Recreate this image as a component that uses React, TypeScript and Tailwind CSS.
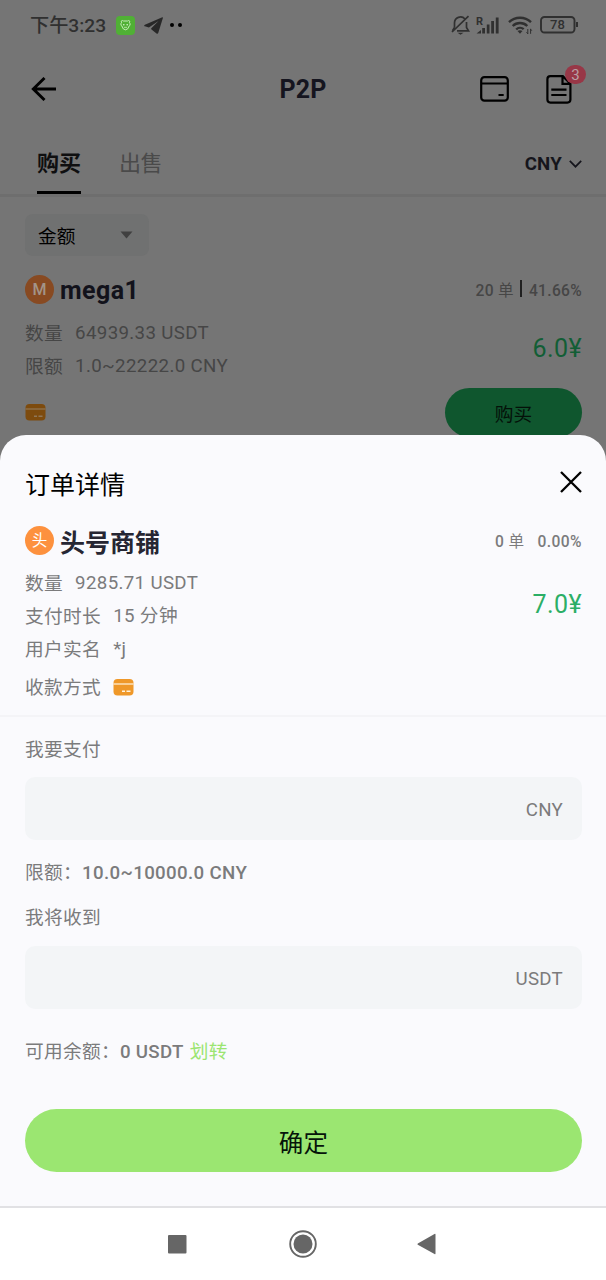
import type { ReactNode } from "react";

function StatusBar() {
    return (
        <div className="flex h-[50px] items-center justify-between pl-[30px] pr-[27px] text-[#303030]">
            <div className="flex items-center">
                <span className="w-[86px] whitespace-nowrap pt-[1px] text-[19.200px] font-medium leading-[26px]">下午3:23</span>
                <svg className="block" width="19" height="19" viewBox="0 0 19 19" fill="none">
                    <rect width="19" height="19" rx="4" fill="#50b035" />
                    <path d="M5.2 5.2 6.4 4.500 7.400 5h4.200l1-.5 1.200.7-.4 1.600q1 .5.600 2.200-.3.900-.9 1-.9 3.800-3.600 3.800T5.900 10q-.6-.1-.9-1-.4-1.700.6-2.200z" stroke="#c6edb9" strokeWidth="1" />
                    <circle cx="7.800" cy="8.800" r=".8" fill="#d9f5d0" />
                    <circle cx="11.200" cy="8.800" r=".8" fill="#d9f5d0" />
                    <path d="M8 11.300h3" stroke="#c6edb9" strokeWidth=".8" />
                </svg>
                <svg className="ml-[9px] block" width="19" height="17" viewBox="0 0 19 17" fill="#282828">
                    <path d="M18.300.2.900 7.800c-1 .5-1 1.200 0 1.500l4 1.200L14.500 4 7.300 11.300c-.3.400-.2.800.2 1.100l5 4c.8.600 1.600.3 1.800-.7L18.900.9c.1-.6-.1-.9-.6-.7z" />
                </svg>
                <span className="ml-[7px] size-[4px] rounded-full bg-black" />
                <span className="ml-[4px] size-[4px] rounded-full bg-black" />
            </div>
            <div className="flex items-center">
                <svg className="block" width="19" height="20" viewBox="0 0 19 20" fill="none" stroke="#303030" strokeWidth="1.700">
                    <path d="M3.500 12.500V8a6 6 0 0 1 10.500-4M15.500 7v5.500l2 3.300H6M1 17 17.500 1.200M1.500 15.800l2-3.300" />
                    <path d="M6.500 17.800h6l-3 1.900z" fill="#303030" stroke="none" />
                </svg>
                <svg className="ml-[6px] block" width="25" height="19" viewBox="0 0 25 19" fill="#303030">
                    <text x="0" y="8.500" fontSize="11" fontWeight="700">R</text>
                    <path d="M.5 17.500l4.500-3.500v3.500zM6.200 12H9v5.500H6.200zM10.800 8.500h2.700v9h-2.700zM15.200 5H18v12.500h-2.800zM19.800 1.500h2.800v16h-2.800z" />
                </svg>
                <svg className="ml-[7px] block" width="25" height="20" viewBox="0 0 25 20" fill="none" stroke="#303030" strokeWidth="2.400">
                    <path d="M1 7.100a16 16 0 0 1 22 0M4.700 11a10.500 10.500 0 0 1 14.600 0M8.200 14.500a5.500 5.500 0 0 1 7.500-.3" />
                    <path d="M9.500 16q2.500-1.500 5 0L12 18.800z" fill="#303030" stroke="none" />
                    <path d="M19.800 14v5M22.600 13.800v5M18.500 17.300l1.300 1.500M22.600 14.200l1.200 1.500" strokeWidth="1" />
                </svg>
                <svg className="ml-[7px] mr-[1px] block" width="38" height="18" viewBox="0 0 38 18" fill="none">
                    <rect x="1" y="1" width="33.500" height="15.500" rx="3.500" stroke="#303030" strokeWidth="1.900" />
                    <path d="M37 6v5" stroke="#303030" strokeWidth="2" />
                    <text x="17.500" y="13.400" textAnchor="middle" fill="#303030" fontSize="13" fontWeight="500">78</text>
                </svg>
            </div>
        </div>
    );
}

function AppBar() {
    return (
        <div className="grid h-[78px] grid-cols-3 items-center px-[22px]">
            <svg className="ml-[9px] block" width="26" height="24" viewBox="0 0 26 24" fill="none" stroke="#000" strokeWidth="2.900">
                <path d="M25 12H2.500M13.500 1 2.300 12l11.200 11" />
            </svg>
            <h1 className="pt-[2px] text-center text-[25px] font-bold leading-[30px] tracking-[0.200px] text-[#15151f]">P2P</h1>
            <div className="flex items-center justify-end">
                <svg className="block" width="29" height="26" viewBox="0 0 29 26" fill="none" stroke="#000" strokeWidth="2.200">
                    <rect x="1.200" y="1.200" width="26.600" height="23.400" rx="3.200" />
                    <path d="M1.200 7.500h26.600M18.500 19h5.200" />
                </svg>
                <div className="relative ml-[37px] mr-[12px]">
                    <svg className="block" width="26" height="29" viewBox="0 0 26 29" fill="none" stroke="#000" strokeWidth="2.200">
                        <path d="M16.800 1.200H4.400a3 3 0 0 0-3 3v20.400a3 3 0 0 0 3 3h17a3 3 0 0 0 3-3V8.800zM16.500 1.200v7.600h7.900M5.300 14.700h15.200M5.300 20h15.200" />
                    </svg>
                    <span className="absolute -right-[14px] -top-[10px] flex h-[19px] w-[21px] items-center justify-center rounded-full bg-[#983747] pt-[2px] text-[15px] text-[#b8a0a4]">
                        3
                    </span>
                </div>
            </div>
        </div>
    );
}

function Tabs() {
    return (
        <div className="flex h-[69px] items-start justify-between border-b-[3px] border-[#6e6e6e] pl-[37px] pr-[24px]">
            <div className="flex gap-[38px] text-[22px] leading-[30px]">
                <div className="flex h-[66px] flex-col justify-between pt-[21px]">
                    <span className="font-bold text-[#0f0f10]">购买</span>
                    <span className="h-[3px] w-[44px] bg-black" />
                </div>
                <span className="pt-[21px] tracking-[-0.5px] text-[#4a4a4a]">出售</span>
            </div>
            <div className="flex items-center gap-[7px] pt-[23px] text-[18.700px] font-bold leading-[26px] tracking-[0.200px] text-[#15151c]">
                CNY
                <svg className="block" width="13" height="8" viewBox="0 0 13 8" fill="none" stroke="#15151c" strokeWidth="1.700">
                    <path d="m.8.900 5.700 5.800L12.200.9" />
                </svg>
            </div>
        </div>
    );
}

function CardIcon({ dimmed = false }: { dimmed?: boolean }) {
    const fill = dimmed ? "#7d4b0e" : "#ef9829";
    const line = dimmed ? "#8f7758" : "#fff3df";
    return (
        <svg className="block" width="21" height="17" viewBox="0 0 21 17" fill="none">
            <rect x=".5" width="20" height="16.500" rx="4" fill={fill} />
            <path d="M.5 5h20" stroke={line} strokeWidth="1.200" />
            <path d="M9 12.200h3M13.500 12.200h4" stroke={line} strokeWidth="1.500" />
        </svg>
    );
}

function Row({ label, children }: { label: string; children: ReactNode }) {
    return (
        <div className="flex h-[33px] items-center gap-[12px] whitespace-nowrap text-[18.700px] tracking-[0.350px]">
            <span className="pt-[4px]">{label}</span>
            <span className="pt-[1px]">{children}</span>
        </div>
    );
}

function Field({ unit }: { unit: string }) {
    return (
        <div className="flex h-[63px] items-center justify-end rounded-[10px] bg-[#f3f5f7] pr-[19px] pt-[2px] text-[18.700px] tracking-[0.250px]">
            {unit}
        </div>
    );
}

function Listing() {
    return (
        <div className="pl-[25px] pr-[24px] pt-[17px] text-[#464646]">
            <div className="flex h-[42px] w-[124px] items-center justify-between rounded-[8px] bg-[#707171] pl-[13px] pr-[16px] text-[18.700px] text-black">
                <span className="pt-[4px]">金额</span>
                <svg className="block" width="13" height="8" viewBox="0 0 13 8" fill="#404040">
                    <path d="M.5.500h12L6.500 7.500z" />
                </svg>
            </div>
            <div className="mt-[11px] flex h-[44px] items-center">
                <span className="flex size-[29px] items-center justify-center rounded-full bg-[#884a22] pt-[2px] text-[16px] font-medium text-[#a39488]">M</span>
                <span className="ml-[6px] pt-[3px] text-[25px] font-bold tracking-[0.400px] text-[#12121b]">mega1</span>
                <div className="ml-auto flex items-center text-[15.600px] font-medium tracking-[0.300px]">
                    <span className="pt-[6px]">
                        20 <span className="font-normal">单</span>
                    </span>
                    <span className="ml-[6px] mr-[7px] h-[17px] w-[2px] bg-[#202020]" />
                    <span className="pt-[6px]">41.66%</span>
                </div>
            </div>
            <div className="mt-[5px] flex justify-between">
                <div>
                    <Row label="数量">64939.33 USDT</Row>
                    <Row label="限额">1.0~22222.0 CNY</Row>
                </div>
                <span className="mt-[18px] text-[25px] leading-[30px] tracking-[0.400px] text-[#125e35]">6.0¥</span>
            </div>
            <div className="mt-[6px] flex h-[49px] items-center justify-between">
                <CardIcon dimmed />
                <button className="h-[49px] w-[137px] rounded-full bg-[#0f562e] pt-[5px] text-[18.700px] text-[#041109]">购买</button>
            </div>
        </div>
    );
}

function OrderSheet() {
    return (
        <div className="absolute inset-x-0 top-[435px] h-[771px] rounded-t-[26px] bg-[#fafafd] pt-[24px] text-[#7b7b7c]">
            <div className="flex h-[50px] items-center justify-between pl-[25px] pr-[24px]">
                <h2 className="pt-[3px] text-[25px] text-black">订单详情</h2>
                <svg className="-mt-[5px] block" width="22" height="22" viewBox="0 0 22 22" fill="none" stroke="#000" strokeWidth="2.300">
                    <path d="m1 1 20 20M21 1 1 21" />
                </svg>
            </div>
            <div className="mt-[9px] flex h-[44px] items-center pl-[25px] pr-[24px]">
                <span className="flex size-[29px] items-center justify-center rounded-full bg-[#fd913e] pt-[4px] text-[15.600px] text-white">头</span>
                <span className="ml-[6px] pt-[7px] text-[25px] font-bold text-[#262633]">头号商铺</span>
                <div className="ml-auto flex gap-[13px] pt-[5px] text-[15.600px] font-medium tracking-[0.400px]">
                    <span>
                        0 <span className="font-normal">单</span>
                    </span>
                    <span>0.00%</span>
                </div>
            </div>
            <div className="mt-[4px] flex justify-between pl-[25px] pr-[24px]">
                <div>
                    <Row label="数量">9285.71 USDT</Row>
                    <Row label="支付时长">15 分钟</Row>
                    <Row label="用户实名">*j</Row>
                    <div className="mt-[5px]">
                        <Row label="收款方式">
                            <CardIcon />
                        </Row>
                    </div>
                </div>
                <span className="mt-[24px] text-[25px] leading-[30px] tracking-[0.400px] text-[#2bae66]">7.0¥</span>
            </div>
            <div className="mt-[12px] h-[2px] bg-[#f4f4f7]" />
            <div className="pl-[25px] pr-[24px] pt-[18px] text-[18.700px] leading-[30px] tracking-[0.300px]">
                <p className="mb-[12px]">我要支付</p>
                <Field unit="CNY" />
                <p className="mt-[18px]">
                    限额：<span className="font-medium tracking-[0.350px]">10.0~10000.0 CNY</span>
                </p>
                <p className="mb-[13px] mt-[15px]">我将收到</p>
                <Field unit="USDT" />
                <p className="mt-[28px]">
                    可用余额：<span className="font-medium">0 USDT</span>
                    <span className="ml-[6px] text-[#9be571]">划转</span>
                </p>
                <button className="mt-[42px] h-[63px] w-full rounded-full bg-[#9be671] pt-[7px] text-[24.500px] tracking-[0.250px] text-[#06140a]">确定</button>
            </div>
        </div>
    );
}

function NavBar() {
    return (
        <div className="absolute inset-x-0 bottom-0 flex h-[74px] items-center border-t-2 border-[#e1e1e4] bg-white pl-[168px]">
            <svg className="block" width="19" height="19" viewBox="0 0 19 19" fill="#666">
                <rect width="18.500" height="18.500" rx="1" />
            </svg>
            <svg className="ml-[102px] block" width="28" height="28" viewBox="0 0 28 28" fill="none">
                <circle cx="14" cy="14" r="12.800" stroke="#666" strokeWidth="1.900" />
                <circle cx="14" cy="14" r="9.500" fill="#666" />
            </svg>
            <svg className="ml-[100px] block" width="19" height="22" viewBox="0 0 19 22" fill="#666">
                <path d="M18.500 1.500v19q0 1-1 .4L.8 11.700q-.8-.7 0-1.300L17.500 1q1-.5 1 .5z" />
            </svg>
        </div>
    );
}

export default function App() {
    return (
        <div className="relative h-[1280px] w-[606px] overflow-hidden bg-[#757575] font-[Roboto,'Noto_Sans_CJK_SC',sans-serif]">
            <StatusBar />
            <AppBar />
            <Tabs />
            <Listing />
            <OrderSheet />
            <NavBar />
        </div>
    );
}
